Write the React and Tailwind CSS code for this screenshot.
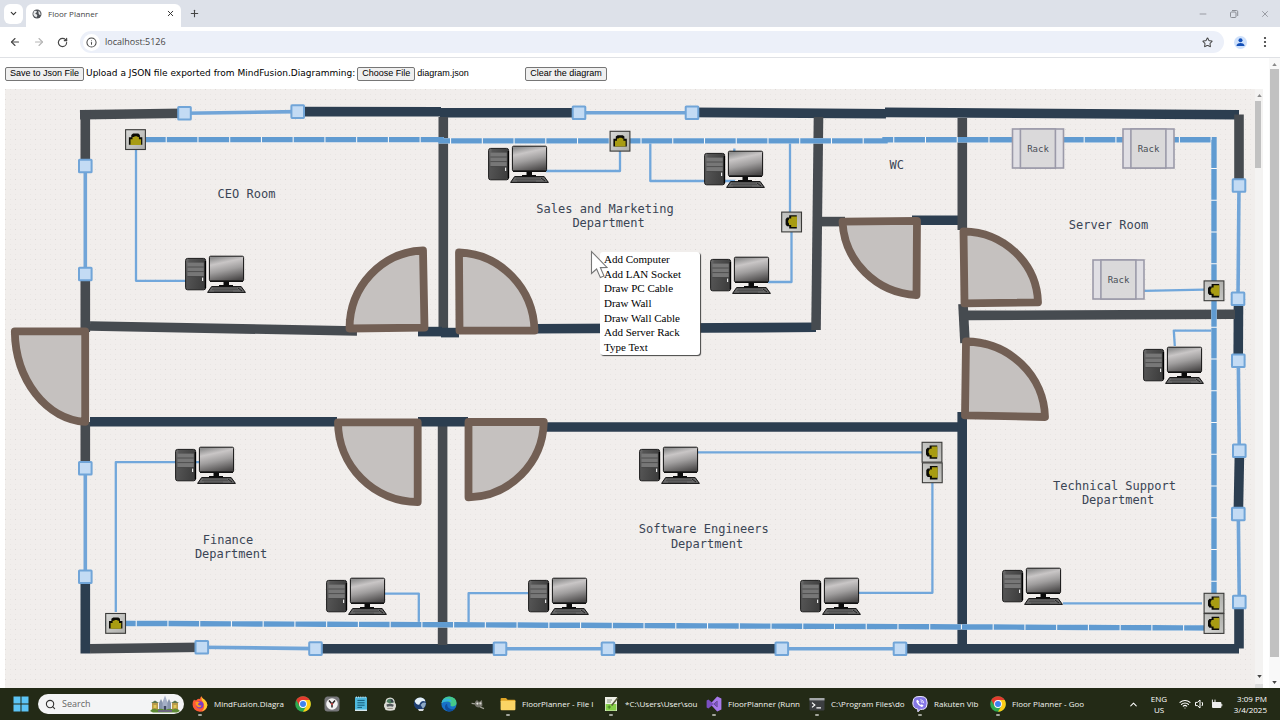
import { useRef, useState } from 'react'
import { ArrowLeft, ArrowRight, ChevronDown, ChevronUp, Info, Minus, Plus, RotateCw, Search, Star, Wifi, X } from 'lucide-react'

const NAVY = '#2c3e50'
const GRAY = '#464b50'

// x1, y1, x2, y2, color
const walls = [
  [80, 114.8, 184, 113.2, GRAY],
  [298, 111.6, 441, 111.8, NAVY],
  [440, 112.8, 579, 112.8, NAVY],
  [692, 112.4, 886, 113.8, NAVY],
  [885, 112.4, 1239, 114.8, NAVY],
  [85.3, 110, 85.3, 166, GRAY],
  [85.3, 274, 85.3, 332, GRAY],
  [85.3, 422, 85.3, 468, GRAY],
  [85.3, 577, 85.3, 653.5, NAVY],
  [1239, 114.5, 1239, 185, GRAY],
  [1238.5, 299, 1238.2, 361, NAVY],
  [1239.5, 451, 1238.3, 514, NAVY],
  [1239, 602, 1239, 648.5, NAVY],
  [90, 648.8, 202, 647.2, GRAY],
  [315, 648.7, 500, 648.7, NAVY],
  [608, 648.7, 782, 648.7, NAVY],
  [900, 648.7, 1239, 648.7, NAVY],
  [443.3, 117, 443.3, 328, GRAY],
  [442.6, 426, 442.6, 645, GRAY],
  [90, 326, 357, 331, GRAY],
  [418, 331.6, 442, 331.6, NAVY],
  [441, 332.6, 459, 332.6, NAVY],
  [534, 328.8, 816, 327.3, NAVY],
  [818.5, 117, 816, 330, GRAY],
  [822, 221.6, 845, 221.6, GRAY],
  [912, 220.2, 962, 220.2, NAVY],
  [962.3, 118, 962.3, 230, GRAY],
  [963, 304, 965, 343, GRAY],
  [968, 315.4, 1235, 314.3, GRAY],
  [90, 421.8, 337, 421.8, NAVY],
  [418, 421.8, 468, 421.8, NAVY],
  [546, 427, 960, 427, NAVY],
  [962.2, 412, 962.2, 645, NAVY],
]

const windows = [
  [184.5, 113.3, 297.7, 111.6],
  [579, 112.7, 692, 112.7],
  [85.3, 166, 85.3, 274],
  [85.3, 468.3, 85.3, 576.8],
  [1239, 185.5, 1238, 298.8],
  [1238.3, 360.8, 1239.3, 450.8],
  [1238.3, 514, 1239.3, 602],
  [201.8, 647.3, 315.5, 648.6],
  [500, 648.7, 608, 648.7],
  [781.8, 648.7, 900, 648.7],
]

const doors = [
  'M349.5 328.5 A76 78 0 0 1 423 250.5 L424.5 327.7 Z',
  'M459 252.5 A78 80 0 0 1 534.5 330.6 L459.5 330.6 Z',
  'M842.5 221.7 A78 77 0 0 0 916.5 295 L917 220.8 Z',
  'M963.5 231.3 A76 73 0 0 1 1038 302.4 L964.5 303.4 Z',
  'M966 341.5 A80 77 0 0 1 1045 417 L965 415.4 Z',
  'M14.8 331.4 A74 92 0 0 0 85.2 421.8 L85.2 331.4 Z',
  'M338 422.3 A80 80 0 0 0 417.7 502 L417.7 422.3 Z',
  'M468.5 497.3 A77 77 0 0 0 543.8 422 L468.5 422 Z',
]

const wallCables = [
  'M135 139.6 H441 V140.9 H885 V139.7 H1214 V603',
  'M105 623.3 L1214 628',
]

const pcCables = [
  'M136 150 V280.8 H186',
  'M546 171 H620 V151',
  'M650.3 143 V181 H735',
  'M734.3 148.5 V154',
  'M790 142 V212',
  'M791.5 232 V282 H768',
  'M1144 290.8 L1204 289.6',
  'M1214 330.6 H1173.8 L1174.8 346',
  'M115.8 612 V462.2 H200',
  'M385 593.6 H418.8 V622',
  'M468.6 622 V593.2 H528',
  'M698 452.4 H922',
  'M932.4 483 V592.8 H858',
  'M1063 603.4 H1202',
]

const computers = [
  [185, 255], [488, 145], [704, 150], [710, 256], [1143, 346], [175, 446],
  [326, 577], [528, 577], [639, 446], [800, 577], [1002, 567],
]

// x, y of the center, rotation
const sockets = [
  [135.5, 139.6, 0], [620, 141.2, 0], [791.6, 222, -90], [1214, 290.8, -90], [115.6, 623.4, 0],
  [932, 452.2, -90], [932.3, 472.8, -90], [1214, 603.2, -90], [1214, 623.5, -90],
]

const racks = [[1012, 128.5], [1122.5, 128.5], [1092.5, 259.5]]

const labels = [
  [246.5, 198, 'CEO Room'],
  [605, 213, 'Sales and Marketing'],
  [608.5, 227, 'Department'],
  [896.7, 169, 'WC'],
  [1108.5, 229, 'Server Room'],
  [1114.5, 490, 'Technical Support'],
  [1118, 504, 'Department'],
  [228, 544, 'Finance'],
  [231, 558, 'Department'],
  [703.8, 533, 'Software Engineers'],
  [707, 548, 'Department'],
]

const menuItems = ['Add Computer', 'Add LAN Socket', 'Draw PC Cable', 'Draw Wall', 'Draw Wall Cable', 'Add Server Rack', 'Type Text']

function Computer({ x, y }) {
  return (
    <g transform={`translate(${x} ${y})`}>
      <rect x="0.6" y="3.4" width="20" height="31.4" rx="2" fill="url(#tower)" stroke="#1b1b1b" />
      <path d="M20.4 6 V33" stroke="#000" strokeWidth="1.4" />
      <rect x="2.4" y="7.6" width="16.4" height="13.6" fill="#777" />
      <path d="M2.4 12 H18.8 M2.4 16.6 H18.8 M2.4 21.6 H18.8" stroke="#454545" strokeWidth="0.8" />
      <rect x="17" y="22.6" width="1.2" height="3.4" fill="#e8e8e8" />
      <path d="M38.5 26 H44 V30 H48 V32 H34 V30 H38.5 Z" fill="#0c0c0c" />
      <rect x="24.4" y="1.2" width="34.2" height="24.8" rx="1.2" fill="url(#screen)" stroke="#111" />
      <path d="M25 26.3 H58" stroke="#111" strokeWidth="1.2" />
      <path d="M26.6 31.6 H56.2 L60.4 37.4 H22.6 Z" fill="#686868" stroke="#0d0d0d" strokeWidth="1" />
      <path d="M28 33 H52 M27 34.6 H53 M29 36.2 H48" stroke="#3c3c3c" strokeWidth="0.6" />
      <path d="M53 33 L57 36" stroke="#222" strokeWidth="1" />
    </g>
  )
}

function Socket({ x, y, angle }) {
  return (
    <g transform={`translate(${x} ${y}) rotate(${angle})`}>
      <rect x="-9.9" y="-9.9" width="19.8" height="19.8" fill="url(#plate)" stroke="#3a3a38" strokeWidth="1.1" />
      <path d="M-6.6 5.2 V-2.4 H-4.2 V-4.6 L-2.4 -6 H2.8 L4.4 -4.6 V-2.4 H6.8 V5.2 Z" fill="#0b0b06" />
      <path d="M-5 5.4 V-0.4 H-3 V-2.6 H-1.6 L-0.6 -3.4 H1.4 L2.4 -2.6 H3.4 V-0.4 H5.6 V5.4 Z" fill="#a89c12" />
    </g>
  )
}

function Rack({ x, y }) {
  return (
    <g transform={`translate(${x} ${y})`}>
      <rect x="0.5" y="0.5" width="51" height="39" fill="#e0dfe4" stroke="#9b9aa9" strokeWidth="1.6" />
      <rect x="8.4" y="0.5" width="35" height="39" fill="#dad9da" stroke="#9b9aa9" strokeWidth="1.6" />
      <text x="26" y="23" textAnchor="middle" fill="#4a4f57" className="font-['DejaVu_Sans_Mono',monospace] text-[9px]">Rack</text>
    </g>
  )
}

function FloorPlan() {
  return (
    <svg viewBox="5 89 1250 599" width="1250" height="599" className="block max-w-none" role="img" aria-label="Floor plan">
      <defs>
        <linearGradient id="tower" x1="0" y1="0" x2="1" y2="0.3">
          <stop offset="0" stopColor="#777" />
          <stop offset="0.2" stopColor="#555" />
          <stop offset="1" stopColor="#3f3f3f" />
        </linearGradient>
        <linearGradient id="screen" x1="0.35" y1="0" x2="0.65" y2="1">
          <stop offset="0" stopColor="#8f8f8f" />
          <stop offset="0.25" stopColor="#c9c6c6" />
          <stop offset="0.55" stopColor="#a09e9e" />
          <stop offset="1" stopColor="#4a4848" />
        </linearGradient>
        <linearGradient id="plate" x1="0" y1="0" x2="1" y2="1">
          <stop offset="0" stopColor="#d9dad8" />
          <stop offset="1" stopColor="#adada9" />
        </linearGradient>
        <pattern id="dots" x="5" y="89" width="10" height="10" patternUnits="userSpaceOnUse">
          <rect width="1" height="1" fill="#ddd9d6" />
          <rect x="5" width="1" height="1" fill="#e9e6e3" />
          <rect y="5" width="1" height="1" fill="#e9e6e3" />
          <rect x="5" y="5" width="1" height="1" fill="#e9e6e3" />
        </pattern>
      </defs>
      <rect x="5" y="89" width="1250" height="599" fill="#f1eeec" />
      <rect x="5" y="89" width="1250" height="599" fill="url(#dots)" />

      {walls.map(([x1, y1, x2, y2, color], i) => (
        <line key={i} x1={x1} y1={y1} x2={x2} y2={y2} stroke={color} strokeWidth="9.6" />
      ))}

      {pcCables.map((d) => (
        <path key={d} d={d} fill="none" stroke="#71a7db" strokeWidth="2.3" strokeLinejoin="round" />
      ))}

      {wallCables.map((d) => (
        <g key={d} fill="none" strokeWidth="5.4">
          <path d={d} stroke="#fbfbfb" />
          <path d={d} stroke="#609bd1" strokeDasharray="30.7 1.04" />
        </g>
      ))}

      {windows.map(([x1, y1, x2, y2]) => (
        <g key={`${x1}-${y1}`} stroke="#71a5d8">
          <line x1={x1} y1={y1} x2={x2} y2={y2} strokeWidth="3.6" />
          <rect x={x1 - 6.3} y={y1 - 6.3} width="12.6" height="12.6" rx="0.6" fill="#c3dbf4" strokeWidth="2" />
          <rect x={x2 - 6.3} y={y2 - 6.3} width="12.6" height="12.6" rx="0.6" fill="#c3dbf4" strokeWidth="2" />
        </g>
      ))}

      {doors.map((d) => (
        <path key={d} d={d} fill="#c5c1bf" stroke="#725f54" strokeWidth="7.8" strokeLinejoin="round" />
      ))}

      {computers.map(([x, y]) => <Computer key={`${x}-${y}`} x={x} y={y} />)}
      {racks.map(([x, y]) => <Rack key={`${x}-${y}`} x={x} y={y} />)}
      {sockets.map(([x, y, angle]) => <Socket key={`${x}-${y}`} x={x} y={y} angle={angle} />)}

      {labels.map(([x, y, text]) => (
        <text key={`${x}-${y}`} x={x} y={y} textAnchor="middle" fill="#3a4555" className="font-['DejaVu_Sans_Mono',monospace] text-[12px]">{text}</text>
      ))}
    </svg>
  )
}

function ContextMenu() {
  return (
    <>
      <div role="menu" className="absolute left-[595px] top-[163px] w-[100px] h-[103px] flex flex-col bg-white rounded-[3px] shadow-[1px_1px_1px_#444]">
        {menuItems.map((item) => (
          <button key={item} role="menuitem" type="button" className="flex-1 pl-1 text-left leading-none whitespace-nowrap font-['Liberation_Serif',serif] text-[11px] text-black">{item}</button>
        ))}
      </div>
      <svg viewBox="0 0 18 30" className="absolute left-[585px] top-[161px] w-[18px] h-[30px]">
        <path d="M1.5 1.5 L1.5 23.5 L6.6 19 L10.4 27.6 L14 26 L10.4 17.6 L17 17.4 Z" fill="#fff" stroke="#777" strokeWidth="1.1" />
      </svg>
    </>
  )
}

function Arrow({ down, dark }) {
  return (
    <svg viewBox="0 0 6 4" className="w-[5px] h-[3px] shrink-0" fill={dark ? '#444' : '#8a8a8a'}>
      <path d={down ? 'M0 0 H6 L3 4 Z' : 'M0 4 H6 L3 0 Z'} />
    </svg>
  )
}

function TabStrip() {
  return (
    <div className="h-[27px] shrink-0 flex items-center pl-1 bg-[#dde1e9]">
      <button aria-label="Search tabs" className="w-[19px] h-[20px] rounded-md bg-white flex items-center justify-center">
        <ChevronDown size={9} strokeWidth={3} className="text-[#333]" />
      </button>
      <div className="ml-[3px] mt-1 h-[23px] w-[155px] pl-[6px] pr-[6px] pb-1 flex items-center rounded-t-md bg-white">
        <svg viewBox="0 0 10 10" className="w-[10px] h-[10px]">
          <circle cx="5" cy="5" r="4.5" fill="#4c5055" />
          <path d="M2 2.2 Q4 1 5 2.4 Q4.6 4 3 4.2 Q4.8 5 5.4 6.6 L4.4 8.6 Q1.6 7.6 1.2 5 Z M6.4 1.4 Q9 3 8.6 6 Q7 6 6.6 4.4 Z" fill="#e6e8ea" />
        </svg>
        <span className="ml-[6px] text-[8px] text-[#444]">Floor Planner</span>
        <button aria-label="Close tab" className="ml-auto"><X size={9} strokeWidth={2.6} className="text-[#333]" /></button>
      </div>
      <button aria-label="New tab" className="ml-2"><Plus size={11} strokeWidth={2.4} className="text-[#444]" /></button>
      <div className="ml-auto flex items-center gap-[21px] pr-[10px] text-[#8b8e95]">
        <Minus size={10} strokeWidth={2} />
        <svg viewBox="0 0 10 10" className="w-[10px] h-[10px]" fill="none" stroke="currentColor">
          <rect x="1.5" y="3" width="5.5" height="5.5" rx="1" />
          <path d="M3 1.5 H7.5 Q8.7 1.5 8.7 2.7 V7" />
        </svg>
        <X size={10} strokeWidth={2} />
      </div>
    </div>
  )
}

function Toolbar() {
  return (
    <div className="h-[31px] shrink-0 flex items-center pl-[9px] bg-white border-b border-[#dfe1e5] text-[#474747]">
      <button aria-label="Back"><ArrowLeft size={12} strokeWidth={2.2} /></button>
      <button aria-label="Forward" className="ml-3 text-[#b5b5b5]"><ArrowRight size={12} strokeWidth={2.2} /></button>
      <button aria-label="Reload" className="ml-3"><RotateCw size={11} strokeWidth={2.6} /></button>
      <div className="ml-[12px] flex-1 h-[22px] pl-[3px] flex items-center rounded-full bg-[#ecf0f9]">
        <span className="w-[17px] h-[17px] rounded-full bg-white flex items-center justify-center"><Info size={11} strokeWidth={2.2} /></span>
        <input aria-label="Address" defaultValue="localhost:5126" className="ml-[5px] flex-1 bg-transparent outline-none text-[9px]" />
        <Star size={11} strokeWidth={2.2} className="mr-[11px]" />
      </div>
      <button aria-label="Profile" className="ml-[10px]">
        <svg viewBox="0 0 13 13" className="w-[13px] h-[13px]">
          <circle cx="6.5" cy="6.5" r="6.5" fill="#cfe1fb" />
          <circle cx="6.5" cy="4.3" r="2" fill="#1350b8" />
          <path d="M2.6 10 V9 Q3.4 7.2 6.5 7.1 Q9.6 7.2 10.4 9 V10 Z" fill="#1350b8" />
        </svg>
      </button>
      <button aria-label="Menu" className="ml-4 mr-[13px]">
        <svg viewBox="0 0 4 12" className="w-1 h-3" fill="#333">
          <circle cx="2" cy="2" r="1.1" /><circle cx="2" cy="6" r="1.1" /><circle cx="2" cy="10" r="1.1" />
        </svg>
      </button>
    </div>
  )
}

const formButton = "h-[14px] px-1 flex items-center whitespace-nowrap rounded-[2px] border border-[#767676] bg-[#efefef] font-['Liberation_Sans',sans-serif] text-[9px] text-black"

function DiagramForm() {
  const fileInput = useRef(null)
  const [fileName, setFileName] = useState('diagram.json')

  const handleFile = (e) => {
    const file = e.target.files[0]
    if (file) setFileName(file.name)
  }

  return (
    <div className="h-[31px] shrink-0 flex items-center text-black">
      <button type="button" className={formButton}>Save to Json File</button>
      <label htmlFor="diagram-file" className="mx-[2px] whitespace-nowrap font-['DejaVu_Sans',sans-serif] text-[9px]">Upload a JSON file exported from MindFusion.Diagramming:</label>
      <div className="w-[168px] flex items-center">
        <input id="diagram-file" ref={fileInput} type="file" accept=".json" onChange={handleFile} className="hidden" />
        <button type="button" onClick={() => fileInput.current.click()} className={formButton}>Choose File</button>
        <span className="ml-[2px] font-['Liberation_Sans',sans-serif] text-[9px]">{fileName}</span>
      </div>
      <button type="button" className={formButton}>Clear the diagram</button>
    </div>
  )
}

function ChromeIcon() {
  return (
    <svg viewBox="0 0 16 16" className="w-4 h-4">
      <circle cx="8" cy="8" r="7.8" fill="#2da94f" />
      <path d="M8 8 L1.25 4.1 A7.8 7.8 0 0 1 14.75 4.1 Z" fill="#e33b2e" />
      <path d="M8 4.1 H14.75 A7.8 7.8 0 0 1 8 15.8 L11.4 10 Z" fill="#fdcc16" />
      <path d="M1.25 4.1 L4.6 9.9 L8 8 V4.1 Z" fill="#e33b2e" />
      <circle cx="8" cy="8" r="3.9" fill="#fff" />
      <circle cx="8" cy="8" r="3" fill="#3f83ee" />
    </svg>
  )
}

function FirefoxIcon() {
  return (
    <svg viewBox="0 0 16 16" className="w-4 h-4">
      <path d="M2 3.4 Q3 4.6 4.4 4.2 Q6 2.4 8 3 Q8.4 1 9.4 0.2 Q10 2.2 12.6 3.8 Q15.4 6.2 15.4 9 A7.4 7 0 0 1 0.6 8.6 Q0.6 5.4 2 3.4 Z" fill="#ff5a36" />
      <path d="M9.4 0.2 Q10 2.2 12.6 3.8 Q15.4 6.2 15.4 9 Q14.6 14 10 15.2 Q14 11 11 6 Q9 4 9.4 0.2 Z" fill="#ffcb2e" />
      <circle cx="7.8" cy="8.8" r="3.6" fill="#7a3cc8" />
      <path d="M3.4 6 Q6 5 8 6.8 Q5.8 7 6 8.4 Q7 10 9.6 9.4 Q8.6 12 5.8 11 Q3.4 9.6 3.4 6 Z" fill="#ff9a1f" />
    </svg>
  )
}

function ClockIcon() {
  return (
    <svg viewBox="0 0 16 16" className="w-4 h-4">
      <path d="M3 0.5 H13 Q15 1 15.5 3 V13 Q15.4 15.5 13 15.6 H3 Q0.6 15.4 0.5 13 V3 Q1 1 3 0.5 Z" fill="#77777a" />
      <circle cx="8" cy="8" r="5.8" fill="#f2f2f2" />
      <path d="M5 4.4 L8 8 L11 4.4 M8 8 V11.6" stroke="#2a2222" strokeWidth="1.5" fill="none" />
      <circle cx="8" cy="8" r="1.1" fill="#c44" />
    </svg>
  )
}

function NotepadIcon() {
  return (
    <svg viewBox="0 0 16 16" className="w-4 h-4">
      <rect x="2" y="1" width="12" height="14" rx="0.8" fill="#4fb8dc" />
      <path d="M2 13.6 H14 V15 H2 Z" fill="#d8e8ee" />
      <path d="M4.4 4.4 H11.6 M4.4 6.8 H11.6 M4.4 9.2 H11.6 M4.4 11.4 H9" stroke="#145a78" strokeWidth="1" />
      <path d="M3.4 0.4 V2 M5.6 0.4 V2 M7.8 0.4 V2 M10 0.4 V2 M12.2 0.4 V2" stroke="#cfeaf4" strokeWidth="0.8" />
    </svg>
  )
}

function HeadIcon() {
  return (
    <svg viewBox="0 0 16 16" className="w-4 h-4">
      <path d="M2 10.4 Q1.6 8 3.4 6.4 Q3.4 1.6 8.2 1.4 Q12.8 1.8 12.8 6.4 Q14.4 8 14 10.4 L12.6 14 Q8 15.6 3.6 14 Z" fill="#dcdcd6" />
      <path d="M4.6 6 Q5 2.8 8.4 2.8 Q11.4 3.2 11.6 6.4 L8 7.4 Z" fill="#4b7a5e" />
      <path d="M8.6 3 Q11.4 3.4 11.6 6.4 L9 6 Z" fill="#38404a" />
      <path d="M4.4 8.6 Q8 6.8 11.8 8.8 L11 10.8 Q8 9.6 5 10.8 Z" fill="#53585c" />
      <path d="M5.4 12.4 H10.8" stroke="#8d8a80" />
    </svg>
  )
}

function GlobeIcon() {
  return (
    <svg viewBox="0 0 16 16" className="w-4 h-4">
      <circle cx="8" cy="7.6" r="6.2" fill="#1f3f72" />
      <path d="M2.6 5 Q5 1.2 9 1.6 Q12.6 2.2 13.4 5.4 Q9 3.6 7.4 8.6 Q4 9 2.6 5 Z" fill="#e4f0f8" />
      <path d="M8.6 9 Q11 5.6 14 7 Q13.8 10.6 11 12.8 Z" fill="#8ea9c4" />
      <path d="M6 13 H12 L11 15 H7 Z" fill="#d5d9dc" />
    </svg>
  )
}

function EdgeIcon() {
  return (
    <svg viewBox="0 0 16 16" className="w-4 h-4">
      <circle cx="8" cy="8" r="7.6" fill="#1872c8" />
      <path d="M0.5 7 Q1.6 0.6 8.4 0.4 Q15.4 1 15.6 7 Q15.2 10.2 11.8 10.4 Q9 10.4 9.6 8.8 Q10.4 6 7 5.4 Q3 5 0.5 7 Z" fill="#45c98a" />
      <path d="M0.5 7 Q1.6 1.6 7.6 2.6 Q10.4 3.2 10.6 6.4 Q9 4.8 7 5.2 Q3 5.2 0.5 7 Z" fill="#35b7dd" />
      <path d="M6.2 7.4 Q5.6 12 10.4 13.2 Q12.8 13.4 14.4 12 Q11.4 16.2 7 15.4 Q3.6 13.6 4 10 Q4.6 8 6.2 7.4 Z" fill="#0f4f9e" />
    </svg>
  )
}

function GimpIcon() {
  return (
    <svg viewBox="0 0 16 16" className="w-4 h-4">
      <path d="M5 6 L7 4 L9 6 L12 4 L12.4 9 Q12.6 11 9 11.4 Q5.6 11.4 5 9 Z" fill="#77776e" />
      <circle cx="7.4" cy="7.6" r="1.1" fill="#e6e6e0" />
      <circle cx="10.4" cy="7.4" r="1.1" fill="#d8d8d0" />
      <path d="M1.6 7.4 L5 7.8 M10 11 L14 12.6" stroke="#a0a098" strokeWidth="1.2" />
    </svg>
  )
}

function FolderIcon() {
  return (
    <svg viewBox="0 0 16 16" className="w-4 h-4">
      <path d="M0.6 3 Q0.6 2 1.6 2 H6 L7.6 3.8 H14.4 Q15.4 3.8 15.4 4.8 V6 H0.6 Z" fill="#e0a526" />
      <rect x="0.6" y="4.8" width="14.8" height="9.4" rx="1" fill="#fbd465" />
    </svg>
  )
}

function NppIcon() {
  return (
    <svg viewBox="0 0 16 16" className="w-4 h-4">
      <path d="M2 1 H14 V15 H2 Z" fill="#eef0e6" />
      <path d="M2.6 8 H13.4 V14.6 H2.6 Z" fill="#86cf4a" />
      <path d="M4 4 H9 M4 6 H8" stroke="#7f8a78" strokeWidth="0.9" />
      <path d="M14.8 1.8 L8.6 9.6" stroke="#555a3a" strokeWidth="1.6" />
      <path d="M4.6 11 H8 M6.2 9.4 V12.8" stroke="#3f7a20" strokeWidth="0.9" />
    </svg>
  )
}

function VisualStudioIcon() {
  return (
    <svg viewBox="0 0 16 16" className="w-4 h-4">
      <path d="M0.6 4.4 L2.4 3.4 L11.4 11 V5 L2.4 12.6 L0.6 11.6 Z" fill="#7a4fc0" />
      <path d="M11.2 0.6 L15.4 2.4 V13.6 L11.2 15.4 L5.6 9.6 L7.6 8 L11.4 11.2 V4.8 L7.6 8 L5.6 6.4 Z" fill="#a779ea" />
    </svg>
  )
}

function TerminalIcon() {
  return (
    <svg viewBox="0 0 16 16" className="w-4 h-4">
      <rect x="0.5" y="2" width="15" height="12.4" rx="0.8" fill="#3d3f42" />
      <rect x="0.5" y="2" width="15" height="2.4" fill="#a5a8aa" />
      <path d="M3 6.6 L5.8 9 L3 11.4 M7.4 11.8 H12" stroke="#fff" strokeWidth="1.2" fill="none" />
    </svg>
  )
}

function ViberIcon() {
  return (
    <svg viewBox="0 0 16 16" className="w-4 h-4">
      <path d="M3.6 1 Q8 -0.2 12.4 1 Q15 2 15.2 7 Q15 12 12.4 13 Q10.4 13.5 8.4 13.4 L5.8 15.8 V13 Q1 12.6 0.8 7 Q1 2 3.6 1 Z" fill="#8577e6" stroke="#ece9ff" strokeWidth="1" />
      <path d="M5.4 3.8 Q4 4.4 4.4 6 Q6 9.6 9.6 11 Q11 11 11.6 9.6 L9.8 8.2 L8.8 9 Q7 8 6.4 6.4 L7.2 5.6 Z" fill="#fff" />
      <path d="M8.4 3.6 Q11.6 4 11.8 7.2 M8.6 5.2 Q10 5.4 10.2 7" stroke="#fff" strokeWidth="0.8" fill="none" />
    </svg>
  )
}

function CastleIcon() {
  return (
    <svg viewBox="0 0 30 18" className="w-[30px] h-[18px]">
      <path d="M2 8 H8 V16 H2 Z M22 8 H28 V16 H22 Z" fill="#b99a4a" />
      <path d="M9 8 L11 4 L13 8 V16 H9 Z M17 8 L19 4 L21 8 V16 H17 Z" fill="#8794ad" />
      <path d="M12.6 7 L15 0.6 L17.4 7 V16 H12.6 Z" fill="#a4afc6" />
      <path d="M1 8 L5 5.4 L9 8 Z M21 8 L25 5.4 L29 8 Z" fill="#5d7650" />
      <path d="M13.8 11 H16.2 V16 H13.8 Z" fill="#3f4860" />
      <path d="M3.6 10 H6.4 V13 H3.6 Z M23.6 10 H26.4 V13 H23.6 Z" fill="#e0ca58" />
      <path d="M0 16 Q3 12.4 7 14.4 Q11 12.6 15 15 Q20 12.6 23 14.4 Q27 12.4 30 16 L27 17.6 H3 Z" fill="#5e8a35" />
      <path d="M8 16 H22" stroke="#7656a0" strokeWidth="1.4" />
    </svg>
  )
}

function TaskApp({ icon, title, width }) {
  return (
    <button type="button" className={`relative h-full shrink-0 flex items-center ${width}`}>
      {icon}
      <span className="ml-[6px] whitespace-nowrap text-left text-[8px] text-[#f2f4ee]">{title}</span>
      <span className="absolute bottom-[4px] left-[6px] w-[4px] h-[2px] rounded-full bg-[#a3a69c]" />
    </button>
  )
}

function Taskbar() {
  return (
    <div className="h-8 shrink-0 flex items-center pl-[13px] pr-[13px] bg-[#232a16] text-white">
      <button aria-label="Start" className="shrink-0 mr-[9px]">
        <svg viewBox="0 0 16 16" className="w-4 h-4" fill="#5cc4f5">
          <path d="M0.5 0.5 H7.5 V7.5 H0.5 Z M8.5 0.5 H15.5 V7.5 H8.5 Z M0.5 8.5 H7.5 V15.5 H0.5 Z M8.5 8.5 H15.5 V15.5 H8.5 Z" />
        </svg>
      </button>
      <div className="w-[146px] h-5 shrink-0 mr-2 pl-[7px] pr-[4px] flex items-center rounded-full bg-[#f3f4f5]">
        <Search size={11} strokeWidth={2.4} className="shrink-0 text-[#333]" />
        <input aria-label="Search" placeholder="Search" className="ml-[6px] flex-1 min-w-0 bg-transparent outline-none text-[9px] placeholder:text-[#666]" />
        <CastleIcon />
      </div>
      <TaskApp icon={<FirefoxIcon />} title="MindFusion.Diagra" width="w-[96px]" />
      <div className="w-[205px] shrink-0 mr-[7px] grid grid-cols-7 justify-items-center">
        <ChromeIcon />
        <ClockIcon />
        <NotepadIcon />
        <HeadIcon />
        <GlobeIcon />
        <EdgeIcon />
        <GimpIcon />
      </div>
      <TaskApp icon={<FolderIcon />} title="FloorPlanner - File I" width="w-[103px]" />
      <TaskApp icon={<NppIcon />} title="*C:\Users\User\sou" width="w-[103px]" />
      <TaskApp icon={<VisualStudioIcon />} title="FloorPlanner (Runn" width="w-[103px]" />
      <TaskApp icon={<TerminalIcon />} title="C:\Program Files\do" width="w-[103px]" />
      <TaskApp icon={<ViberIcon />} title="Rakuten Vib" width="w-[78px]" />
      <TaskApp icon={<ChromeIcon />} title="Floor Planner - Goo" width="w-[96px]" />
      <div className="ml-auto shrink-0 flex items-center text-[8px] leading-[11px]">
        <ChevronUp size={11} strokeWidth={2.2} className="mr-[11px]" />
        <div className="w-[18px] mr-[11px] text-center">ENG<br />US</div>
        <Wifi size={12} strokeWidth={2.2} className="mr-[3px]" />
        <svg viewBox="0 0 12 12" className="w-3 h-3 mr-[5px]" fill="none" stroke="currentColor">
          <path d="M1.5 4.4 H3.4 L6 2 V10 L3.4 7.6 H1.5 Z" />
          <path d="M8 4 Q9.4 6 8 8" />
        </svg>
        <svg viewBox="0 0 12 12" className="w-3 h-3 mr-[8px]">
          <rect x="1" y="4" width="9.4" height="6" rx="1" fill="#eee" />
          <path d="M10.8 6 V8.2" stroke="#eee" strokeWidth="1" />
          <path d="M1.4 1.6 V5.4 M4 1.6 V5.4" stroke="#eee" strokeWidth="1" />
        </svg>
        <div className="w-[36px] text-right">3:09 PM<br />3/4/2025</div>
      </div>
    </div>
  )
}

export default function App() {
  return (
    <div className="h-screen flex flex-col overflow-hidden bg-white font-['Open_Sans',sans-serif]">
      <TabStrip />
      <Toolbar />
      <div className="flex-1 min-h-0 flex">
        <main className="flex-1 min-w-0 flex flex-col pl-[5px] pr-[6px]">
          <DiagramForm />
          <div className="flex-1 min-h-0 flex">
            <div className="relative flex-1 overflow-hidden bg-[#f1eeec]">
              <FloorPlan />
              <ContextMenu />
            </div>
            <div className="w-2 flex flex-col items-center bg-[#f4f3f2] pt-[5px]">
              <Arrow />
              <div className="mt-1 mr-[2px] w-[6px] h-[67px] bg-[#c1c1c1]" />
              <div className="mt-auto mb-[6px] flex"><Arrow down dark /></div>
              <div className="w-full h-[4px] bg-[#dedede]" />
            </div>
          </div>
        </main>
        <div className="w-[11px] flex flex-col items-center pt-[5px] pb-[4px] bg-[#f9f9f9]">
          <Arrow />
          <div className="mt-[3px] mb-[24px] w-[9px] flex-1 bg-[#c1c1c1]" />
          <Arrow down dark />
        </div>
      </div>
      <Taskbar />
    </div>
  )
}
